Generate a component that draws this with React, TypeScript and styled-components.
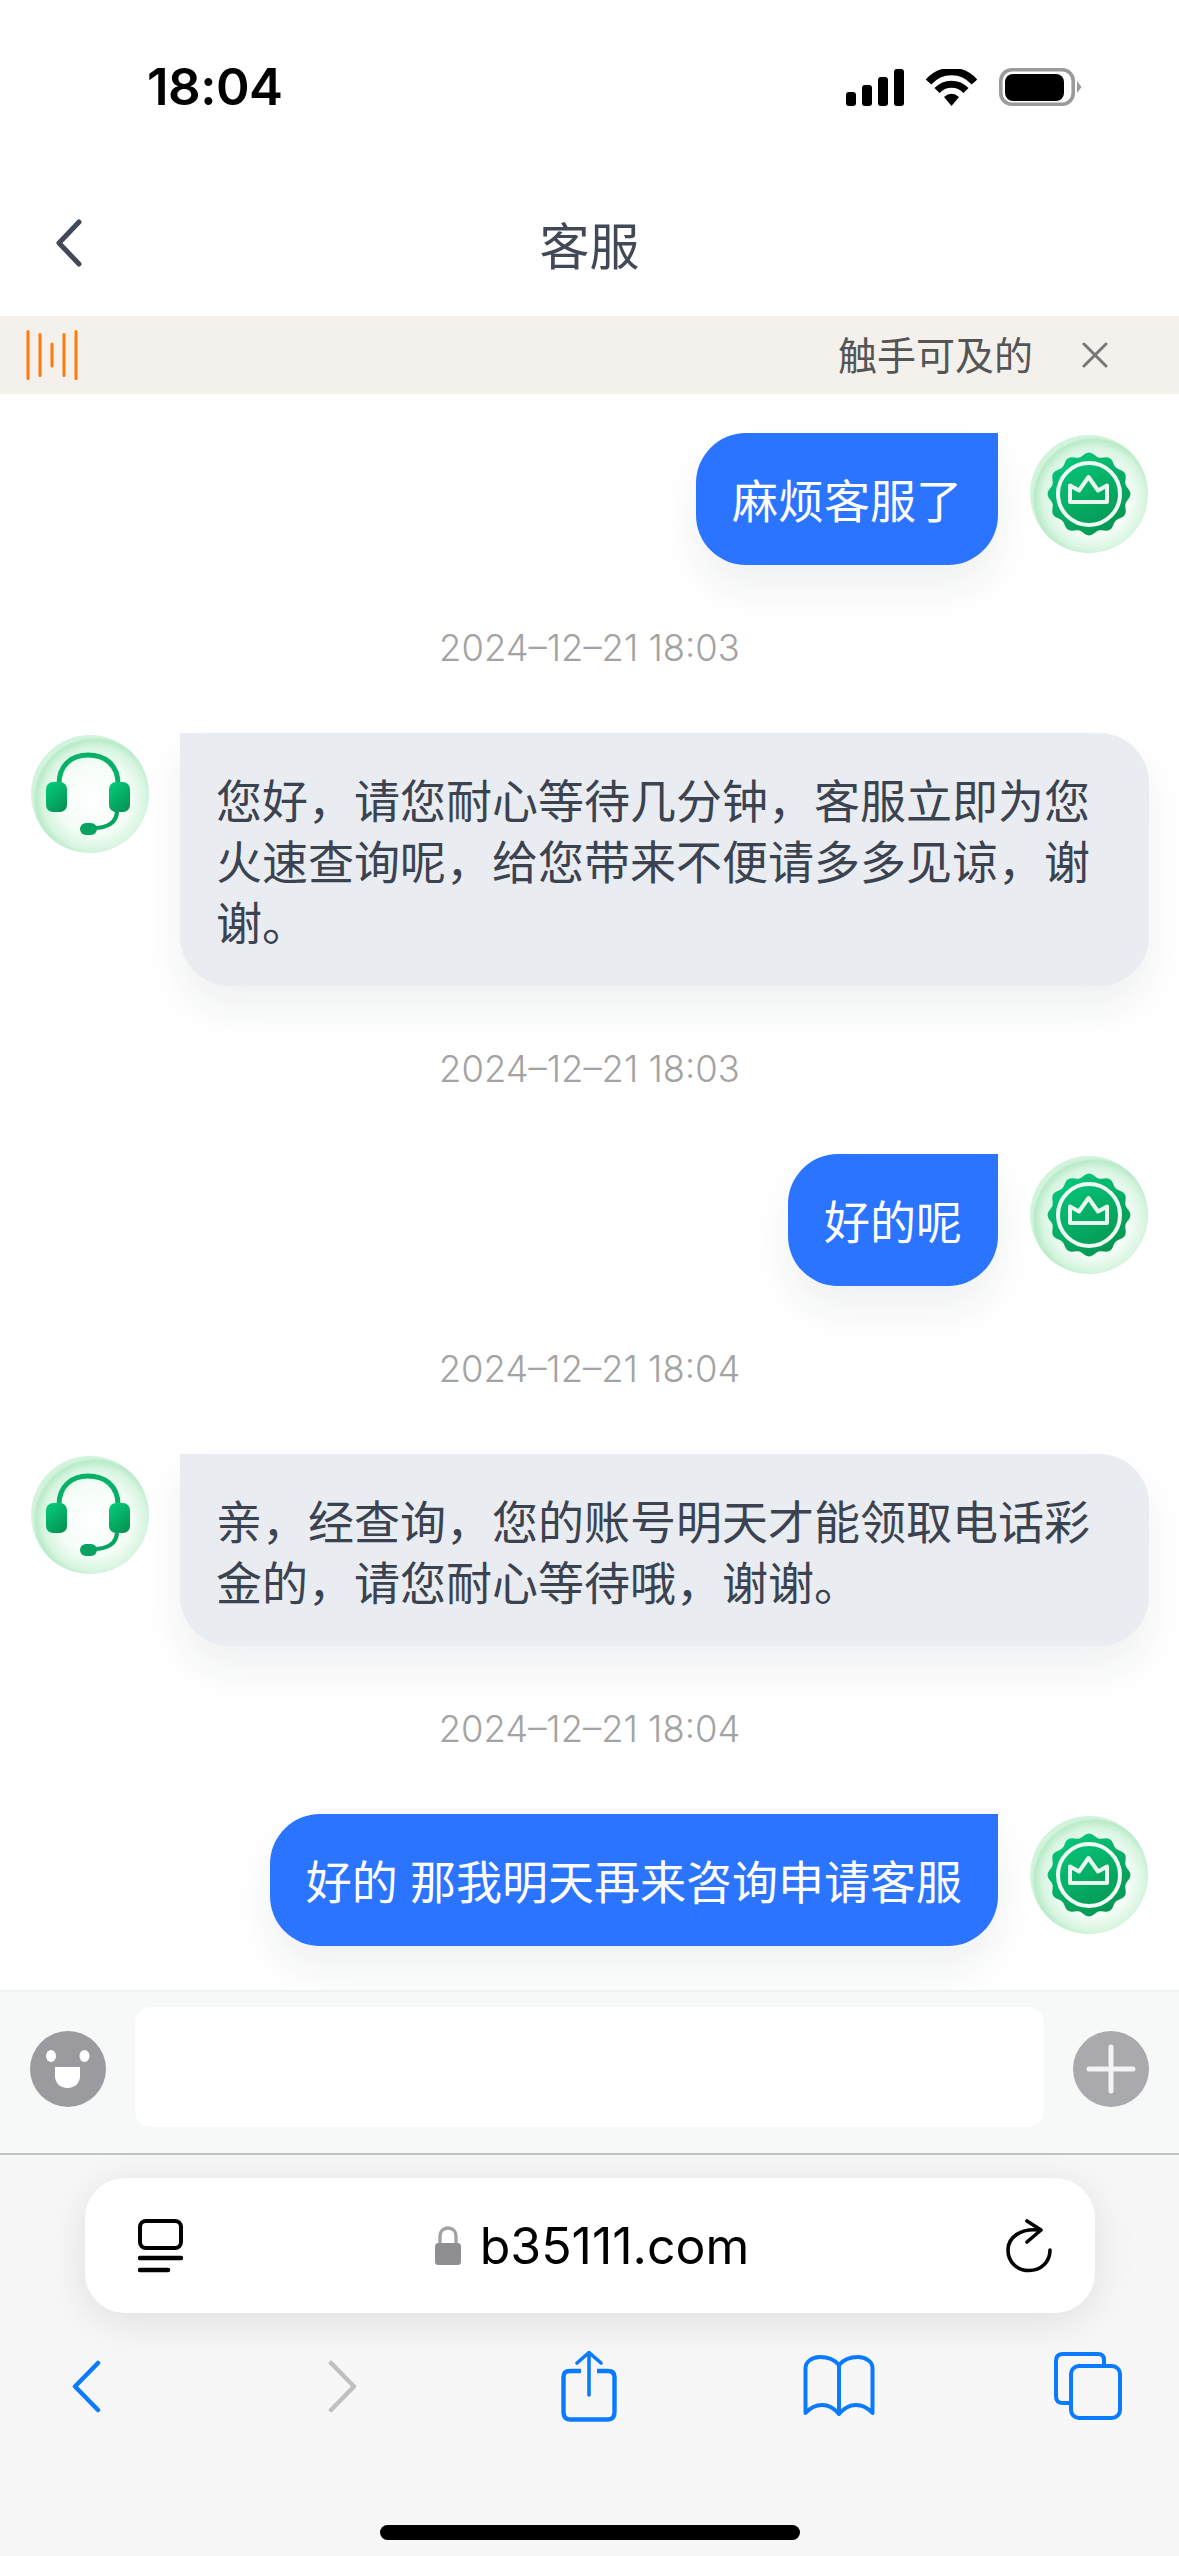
import React from "react";
import styled, { createGlobalStyle } from "styled-components";

const Global = createGlobalStyle`
  html, body { margin: 0; padding: 0; background: #fff; }
  * { box-sizing: border-box; }
`;

const FONT = `Inter, "Noto Sans CJK SC", sans-serif`;
const CJK = `"Noto Sans CJK SC", sans-serif`;

const Page = styled.div`
  width: 1179px;
  height: 2556px;
  display: flex;
  flex-direction: column;
  overflow: hidden;
  background: #fff;
  font-family: ${CJK};
`;

const StatusBar = styled.div`
  height: 160px;
  flex: none;
  display: flex;
  align-items: flex-start;
  justify-content: space-between;
  padding: 61px 97px 0 147px;
`;
const Clock = styled.div`
  font: 600 51px/52px ${FONT};
  color: #000;
  letter-spacing: -0.5px;
`;
const StatusIcons = styled.div`
  display: flex;
  align-items: center;
  gap: 22px;
  margin-top: 7px;
`;

const NavBar = styled.header`
  height: 156px;
  flex: none;
  display: grid;
  grid-template-columns: 200px 1fr 200px;
  align-items: center;
  padding-top: 10px;
`;
const BackBtn = styled.div`
  padding-left: 56px;
  display: flex;
`;
const Title = styled.h1`
  margin: 0;
  text-align: center;
  font: 400 50px/60px ${CJK};
  color: #414958;
`;

const Notice = styled.div`
  height: 78px;
  flex: none;
  background: #f4f1ed;
  display: flex;
  align-items: center;
  justify-content: space-between;
  padding: 0 71px 0 26px;
`;
const NoticeEnd = styled.div`
  display: flex;
  align-items: center;
  gap: 49px;
`;
const NoticeText = styled.span`
  font: 400 39px/48px ${CJK};
  color: #555;
  margin-top: -5px;
`;

const Chat = styled.main`
  flex: 1;
  min-height: 0;
  padding: 39px 30px 0;
  display: flex;
  flex-direction: column;
`;
const Row = styled.div<{ $out?: boolean }>`
  display: flex;
  align-items: flex-start;
  gap: ${(p) => (p.$out ? "31px" : "30px")};
  justify-content: ${(p) => (p.$out ? "flex-end" : "flex-start")};
`;
const Bubble = styled.div<{ $out?: boolean }>`
  padding: 35px 36px 35.5px;
  font: 400 46px/61px ${CJK};
  word-spacing: 2px;
  color: ${(p) => (p.$out ? "#fff" : "#3c4350")};
  background: ${(p) => (p.$out ? "#2b74ff" : "#e9ecf0")};
  border-radius: ${(p) => (p.$out ? "50px 0 50px 50px" : "0 50px 50px 50px")};
  box-shadow: 0 22px 40px rgba(30, 40, 60, 0.07);
  flex: ${(p) => (p.$out ? "none" : "1")};
`;
const Avatar = styled.svg`
  width: 120px;
  height: 120px;
  flex: none;
  margin-top: 1px;
`;
const Stamp = styled.div`
  margin: 59px 0 61px;
  text-align: center;
  font: 350 36.4px/48px ${FONT};
  color: #a3a3a3;
`;

const InputBar = styled.div`
  height: 165px;
  flex: none;
  background: #f7f8f8;
  border-top: 2px solid #eef2f2;
  border-bottom: 2px solid #c4c4c4;
  padding: 15px 30px 0;
  display: flex;
  align-items: flex-start;
  justify-content: space-between;
`;
const RoundIcon = styled.svg`
  width: 76px;
  height: 76px;
  margin-top: 24px;
  flex: none;
`;
const InputBox = styled.div`
  width: 909px;
  height: 120px;
  background: #fff;
  border-radius: 16px;
`;

const Browser = styled.div`
  height: 401px;
  flex: none;
  background: #f7f7f7;
  display: flex;
  flex-direction: column;
  align-items: center;
`;
const UrlPill = styled.div`
  margin-top: 23px;
  width: 1010px;
  height: 135px;
  flex: none;
  background: #fff;
  border-radius: 40px;
  box-shadow: 0 8px 44px rgba(0, 0, 0, 0.1);
  display: grid;
  grid-template-columns: 1fr auto 1fr;
  align-items: center;
  padding: 0 43px 0 53px;
`;
const UrlCenter = styled.div`
  display: flex;
  align-items: center;
  gap: 19px;
  margin-left: -5px;
`;
const UrlText = styled.span`
  font: 400 50px/60px ${FONT};
  color: #000;
`;
const PillEnd = styled.div`
  display: flex;
  justify-content: flex-end;
`;
const Toolbar = styled.nav`
  margin-top: 37px;
  width: 100%;
  display: grid;
  grid-template-columns: 172px 340px 154px 346px 152px;
  align-items: center;
  justify-items: center;
  height: 72px;
`;
const HomeBar = styled.div`
  margin-top: 103px;
  width: 420px;
  height: 15px;
  border-radius: 8px;
  background: #000;
  flex: none;
`;

const scallop = (() => {
  const pts: string[] = [];
  const n = 240;
  for (let i = 0; i < n; i++) {
    const a = (i / n) * Math.PI * 2 - Math.PI / 2;
    const r = 39.6 + 1.8 * Math.cos(12 * (a + Math.PI / 2));
    pts.push(`${(60 + r * Math.cos(a)).toFixed(2)},${(60 + r * Math.sin(a)).toFixed(2)}`);
  }
  return pts.join(" ");
})();

const AvatarDefs: React.FC<{ id: string }> = ({ id }) => (
  <defs>
    <radialGradient id={`${id}-ball`} cx="54%" cy="54%" r="52%">
      <stop offset="0%" stopColor="#ffffff" />
      <stop offset="58%" stopColor="#f5fdf7" />
      <stop offset="84%" stopColor="#d8f5e1" />
      <stop offset="96%" stopColor="#b9ebc9" />
      <stop offset="100%" stopColor="#d2f3dc" />
    </radialGradient>
    <linearGradient id={`${id}-g`} x1="0.2" y1="0" x2="0.8" y2="1">
      <stop offset="0%" stopColor="#05c97c" />
      <stop offset="100%" stopColor="#05934f" />
    </linearGradient>
  </defs>
);

const UserAvatar: React.FC<{ id: string }> = ({ id }) => (
  <Avatar viewBox="0 0 120 120">
    <AvatarDefs id={id} />
    <circle cx="60" cy="60" r="59" fill={`url(#${id}-ball)`} />
    <polygon points={scallop} fill={`url(#${id}-g)`} />
    <circle cx="60" cy="60" r="31" fill="none" stroke="#eefaf3" strokeWidth="4" />
    <path d="M41 51.5 L50 56.5 L59.5 43 L69 56.5 L78 51.5 V68 H41 Z" fill="none" stroke="#e9f8ef" strokeWidth="4" strokeLinejoin="round" />
  </Avatar>
);

const AgentAvatar: React.FC<{ id: string }> = ({ id }) => (
  <Avatar viewBox="0 0 120 120">
    <AvatarDefs id={id} />
    <circle cx="60" cy="60" r="59" fill={`url(#${id}-ball)`} />
    <path d="M29 50 C29 30 43 21 58 21 C74 21 88 30 88 50" fill="none" stroke="#06b168" strokeWidth="5" />
    <rect x="16" y="48" width="21" height="30" rx="7" fill={`url(#${id}-g)`} />
    <rect x="79" y="48" width="21" height="30" rx="7" fill={`url(#${id}-g)`} />
    <path d="M87 77 C87 88 78 94 64 94" fill="none" stroke="#06a45f" strokeWidth="4.2" />
    <rect x="50" y="89" width="17" height="12" rx="6" fill="#06a45f" />
  </Avatar>
);

const Chevron: React.FC<{ color: string; flip?: boolean; w?: number; h?: number; sw?: number }> = ({ color, flip, w = 29, h = 53, sw = 4.5 }) => (
  <svg width={w} height={h} viewBox={`0 0 ${w} ${h}`}>
    <path
      d={flip ? `M3 3 L${w - 3} ${h / 2} L3 ${h - 3}` : `M${w - 3} 3 L3 ${h / 2} L${w - 3} ${h - 3}`}
      fill="none"
      stroke={color}
      strokeWidth={sw}
      strokeLinecap="round"
      strokeLinejoin="round"
    />
  </svg>
);

const BLUE = "#0a7aff";

export default function App() {
  return (
    <Page>
      <Global />
      <StatusBar>
        <Clock>18:04</Clock>
        <StatusIcons>
          <svg width="58" height="37" viewBox="0 0 58 37">
            <rect x="0" y="23" width="10" height="14" rx="3" fill="#000" />
            <rect x="16" y="16" width="10" height="21" rx="3" fill="#000" />
            <rect x="32" y="8" width="10" height="29" rx="3" fill="#000" />
            <rect x="48" y="0" width="10" height="37" rx="3" fill="#000" />
          </svg>
          <svg width="51" height="37" viewBox="0 0 51 37">
            <path d="M2.5 13 C15 -1 36 -1 48.5 13" fill="none" stroke="#000" strokeWidth="7.5" />
            <path d="M11 21.5 C19 13 32 13 40 21.5" fill="none" stroke="#000" strokeWidth="7" />
            <path d="M18 28 Q25.5 21.5 33 28 L25.5 37 Z" fill="#000" />
          </svg>
          <svg width="83" height="38" viewBox="0 0 83 38">
            <rect x="1.8" y="1.8" width="72.4" height="34.4" rx="11" fill="none" stroke="#9a9a9a" strokeWidth="3.6" />
            <rect x="6" y="6" width="59" height="27" rx="8" fill="#000" />
            <path d="M78 13 L82.5 19 L78 25 Z" fill="#9a9a9a" />
          </svg>
        </StatusIcons>
      </StatusBar>

      <NavBar>
        <BackBtn>
          <Chevron color="#414958" w={26} h={48} sw={5} />
        </BackBtn>
        <Title>客服</Title>
        <div />
      </NavBar>

      <Notice>
        <svg width="52" height="50" viewBox="0 0 52 50">
          <g stroke="#ff7a0a" strokeWidth="3" strokeLinecap="round">
            <line x1="2" y1="1.5" x2="2" y2="48.5" />
            <line x1="14" y1="4.5" x2="14" y2="45.5" />
            <line x1="26" y1="14" x2="26" y2="36" />
            <line x1="38" y1="4.5" x2="38" y2="45.5" />
            <line x1="50" y1="1.5" x2="50" y2="48.5" />
          </g>
        </svg>
        <NoticeEnd>
          <NoticeText>触手可及的</NoticeText>
          <svg width="26" height="26" viewBox="0 0 26 26">
            <path d="M2 2 L24 24 M24 2 L2 24" stroke="#777" strokeWidth="3" strokeLinecap="round" />
          </svg>
        </NoticeEnd>
      </Notice>

      <Chat>
        <Row $out>
          <Bubble $out>麻烦客服了</Bubble>
          <UserAvatar id="u1" />
        </Row>
        <Stamp>2024–12–21 18:03</Stamp>
        <Row>
          <AgentAvatar id="a1" />
          <Bubble>您好，请您耐心等待几分钟，客服立即为您火速查询呢，给您带来不便请多多见谅，谢谢。</Bubble>
        </Row>
        <Stamp>2024–12–21 18:03</Stamp>
        <Row $out>
          <Bubble $out>好的呢</Bubble>
          <UserAvatar id="u2" />
        </Row>
        <Stamp>2024–12–21 18:04</Stamp>
        <Row>
          <AgentAvatar id="a2" />
          <Bubble>亲，经查询，您的账号明天才能领取电话彩金的，请您耐心等待哦，谢谢。</Bubble>
        </Row>
        <Stamp>2024–12–21 18:04</Stamp>
        <Row $out>
          <Bubble $out>好的 那我明天再来咨询申请客服</Bubble>
          <UserAvatar id="u3" />
        </Row>
      </Chat>

      <InputBar>
        <RoundIcon viewBox="0 0 76 76">
          <circle cx="38" cy="38" r="38" fill="#9b9b9f" />
          <ellipse cx="21" cy="25" rx="5" ry="6" fill="#fff" />
          <ellipse cx="54.5" cy="25" rx="5" ry="6" fill="#fff" />
          <path d="M25 36 H50 V45 C50 52 45 57 37.5 57 C30 57 25 52 25 45 Z" fill="#fff" />
        </RoundIcon>
        <InputBox />
        <RoundIcon viewBox="0 0 76 76">
          <circle cx="38" cy="38" r="38" fill="#a9a9ae" />
          <path d="M38 16 V60 M16 38 H60" stroke="#f3f3f4" strokeWidth="5" strokeLinecap="round" />
        </RoundIcon>
      </InputBar>

      <Browser>
        <UrlPill>
          <svg width="45" height="54" viewBox="0 0 45 54">
            <rect x="2" y="2" width="41" height="27" rx="6" fill="none" stroke="#000" strokeWidth="4" />
            <line x1="2" y1="39" x2="43" y2="39" stroke="#000" strokeWidth="4.5" strokeLinecap="round" />
            <line x1="2" y1="51" x2="30" y2="51" stroke="#000" strokeWidth="4.5" strokeLinecap="round" />
          </svg>
          <UrlCenter>
            <svg width="26" height="39" viewBox="0 0 26 39">
              <path d="M5 18 V10 C5 5 8.5 2 13 2 C17.5 2 21 5 21 10 V18" fill="none" stroke="#a2a2a6" strokeWidth="3.4" />
              <rect x="0" y="17" width="26" height="22" rx="3.5" fill="#8e8e93" />
            </svg>
            <UrlText>b35111.com</UrlText>
          </UrlCenter>
          <PillEnd>
            <svg width="46" height="54" viewBox="0 0 46 54">
              <path d="M33 11 C15 9 2 18 2 31 C2 43 11 51.5 23 51.5 C35 51.5 44 43 44 31" fill="none" stroke="#000" strokeWidth="3.6" strokeLinecap="round" />
              <path d="M21 2 L35 11 L21 23" fill="none" stroke="#000" strokeWidth="3.6" strokeLinecap="round" strokeLinejoin="round" />
            </svg>
          </PillEnd>
        </UrlPill>

        <Toolbar>
          <Chevron color={BLUE} />
          <Chevron color="#c0c0c2" flip />
          <svg width="56" height="72" viewBox="0 0 56 72">
            <path d="M20 21 H9 C4.5 21 2.5 23 2.5 27 V62 C2.5 67 4.5 69.5 9 69.5 H47 C51.5 69.5 53.5 67 53.5 62 V27 C53.5 23 51.5 21 47 21 H36" fill="none" stroke={BLUE} strokeWidth="4.4" />
            <path d="M28 45 V2.5 M16 13 L28 2.5 L40 13" fill="none" stroke={BLUE} strokeWidth="3.6" strokeLinecap="round" strokeLinejoin="round" />
          </svg>
          <svg width="72" height="62" viewBox="0 0 72 62">
            <path d="M36 10 C31 4 24 2 17 2 C9 2 2.5 7 2.5 13 V58 C8 52 13 50 19 50 C26 50 31 53 36 59 C41 53 46 50 53 50 C59 50 64 52 69.5 58 V13 C69.5 7 63 2 55 2 C48 2 41 4 36 10 Z M36 10 V59" fill="none" stroke={BLUE} strokeWidth="4" strokeLinejoin="round" />
          </svg>
          <svg width="68" height="68" viewBox="0 0 68 68">
            <path d="M50 12 V8 C50 4 48 2 44 2 H9 C4.5 2 2 4.5 2 9 V44 C2 49 4 51 9 51 H15" fill="none" stroke={BLUE} strokeWidth="4" />
            <rect x="17" y="14" width="49" height="52" rx="8" fill="none" stroke={BLUE} strokeWidth="4" />
          </svg>
        </Toolbar>
        <HomeBar />
      </Browser>
    </Page>
  );
}
